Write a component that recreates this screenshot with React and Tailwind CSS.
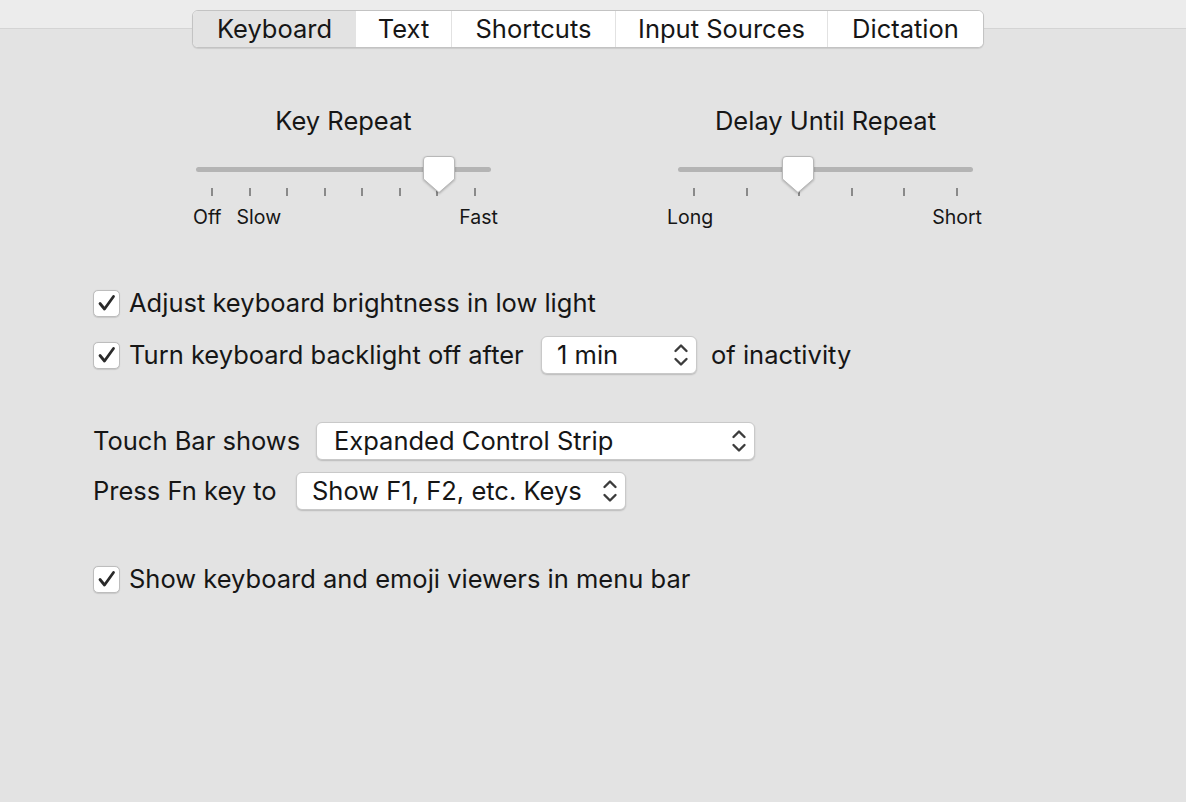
import React from "react";

const font = { fontFamily: "Inter, 'Noto Sans', sans-serif" };

const tabs = ["Keyboard", "Text", "Shortcuts", "Input Sources", "Dictation"];
const tabWidths = ["w-[163px]", "w-[95px]", "w-[164px]", "w-[212px]", "w-[156px]"];

function Thumb({ left }) {
  return (
    <svg
      className={`absolute top-0 ${left} drop-shadow-[0_1px_1px_rgba(0,0,0,0.25)]`}
      width="34"
      height="39"
      viewBox="0 0 34 39"
    >
      <path
        d="M5 1.5 H29 Q32.5 1.5 32.5 5 V24 L17 37.5 L1.5 24 V5 Q1.5 1.5 5 1.5 Z"
        fill="#ffffff"
        stroke="#b8b8b8"
        strokeWidth="1"
      />
    </svg>
  );
}

function Slider({ title, ticks, thumb, labels }) {
  return (
    <div className="w-[295px] flex flex-col">
      <div className="text-center text-[25.5px] leading-[30px]">{title}</div>
      <div className="relative h-[22px] mt-[19px]">
        <div className="mt-[12px] h-[5px] rounded-full bg-[#b4b4b4]" />
        <Thumb left={thumb} />
      </div>
      <div className="mt-[11px] h-[8px] px-[15px] flex justify-between">
        {Array.from({ length: ticks }).map((_, i) => (
          <div key={i} className="w-[2px] h-[8px] bg-[#8a8a8a]" />
        ))}
      </div>
      {labels}
    </div>
  );
}

function Check() {
  return (
    <div className="w-[27px] h-[27px] shrink-0 rounded-[5px] bg-white border border-[#bdbdbd] shadow-[0_0.5px_1px_rgba(0,0,0,0.12)] flex items-center justify-center">
      <svg width="20" height="18" viewBox="0 0 20 18">
        <path
          d="M3 9.5 L7.5 15 L16.5 2.5"
          fill="none"
          stroke="#2a2a2a"
          strokeWidth="2.8"
          strokeLinecap="round"
          strokeLinejoin="round"
        />
      </svg>
    </div>
  );
}

function Chevrons() {
  return (
    <svg width="16" height="26" viewBox="0 0 16 26" className="shrink-0">
      <path
        d="M2.5 9 L8 3.5 L13.5 9 M2.5 17 L8 22.5 L13.5 17"
        fill="none"
        stroke="#3c3c3c"
        strokeWidth="2.4"
        strokeLinecap="round"
        strokeLinejoin="round"
      />
    </svg>
  );
}

function Select({ value, width, pad }) {
  return (
    <div
      className={`${width} ${pad} h-[38px] pr-[7px] rounded-[6px] bg-white border border-[#c9c9c9] shadow-[0_1px_1.5px_rgba(0,0,0,0.18)] flex items-center justify-between`}
    >
      <span>{value}</span>
      <Chevrons />
    </div>
  );
}

export default function App() {
  return (
    <div className="w-[1186px] h-[802px] bg-[#e3e3e3] overflow-hidden text-[#161616]" style={font}>
      {/* toolbar strip behind the segmented tabs */}
      <div className="h-[29px] bg-[#ececec] border-b border-[#d4d4d4]" />

      <div className="-mt-[19px] pl-[192px] flex">
        <div className="flex h-[38px] rounded-[6px] border border-[#c3c3c3] bg-white shadow-[0_1px_1px_rgba(0,0,0,0.1)] overflow-hidden">
          {tabs.map((t, i) => (
            <div
              key={t}
              className={`${tabWidths[i]} pt-[1px] flex items-center justify-center text-[25.5px] ${
                i === 0 ? "bg-[#e3e3e3]" : "bg-white"
              } ${i > 1 ? "border-l border-[#e2e2e2]" : ""}`}
            >
              {t}
            </div>
          ))}
        </div>
      </div>

      {/* repeat sliders */}
      <div className="mt-[58px] pl-[196px] flex gap-[187px]">
        <Slider
          title="Key Repeat"
          ticks={8}
          thumb="left-[226px]"
          labels={
            <div className="mt-[9px] flex text-[19.5px] leading-[24px] -ml-[3px]">
              <span>Off</span>
              <span className="ml-[15px]">Slow</span>
              <span className="ml-auto -mr-[7px]">Fast</span>
            </div>
          }
        />
        <Slider
          title="Delay Until Repeat"
          ticks={6}
          thumb="left-[103px]"
          labels={
            <div className="mt-[9px] flex text-[19.5px] leading-[24px] -ml-[11px] -mr-[9px]">
              <span>Long</span>
              <span className="ml-auto">Short</span>
            </div>
          }
        />
      </div>

      {/* options */}
      <div className="pl-[93px] text-[25.5px] flex flex-col">
        <div className="mt-[55px] h-[38px] flex items-center gap-[9px]">
          <Check />
          <span>Adjust keyboard brightness in low light</span>
        </div>
        <div className="mt-[14px] h-[38px] flex items-center">
          <Check />
          <span className="ml-[9px] w-[412px]">Turn keyboard backlight off after</span>
          <Select value="1 min" width="w-[156px]" pad="pl-[15px]" />
          <span className="ml-[14px]">of inactivity</span>
        </div>

        <div className="mt-[48px] h-[38px] flex items-center">
          <span className="w-[223px]">Touch Bar shows</span>
          <Select value="Expanded Control Strip" width="w-[439px]" pad="pl-[17px]" />
        </div>
        <div className="mt-[12px] h-[38px] flex items-center">
          <span className="w-[203px]">Press Fn key to</span>
          <Select value="Show F1, F2, etc. Keys" width="w-[330px]" pad="pl-[15px]" />
        </div>

        <div className="mt-[50px] h-[38px] flex items-center gap-[9px]">
          <Check />
          <span>Show keyboard and emoji viewers in menu bar</span>
        </div>
      </div>
    </div>
  );
}
